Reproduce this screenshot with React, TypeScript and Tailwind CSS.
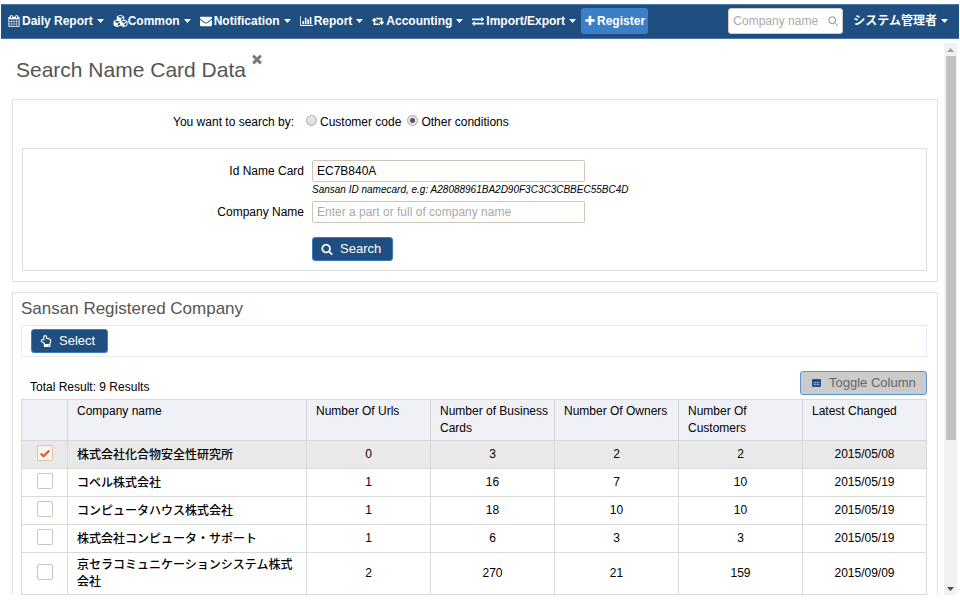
import React from "react";
import { FaCubes, FaRegHandPointUp } from "react-icons/fa";

function Glyph({ d, box = "0 0 1792 1792", className }: { d: string; box?: string; className: string }) {
  return (
    <svg viewBox={box} fill="currentColor" aria-hidden="true" className={`shrink-0 ${className}`}>
      <path d={d} />
    </svg>
  );
}

const CALENDAR =
  "M192 1664h288v-288h-288v288zm352 0h320v-288h-320v288zm-352-352h288v-320h-288v320zm352 0h320v-320h-320v320zm-352-384h288v-288h-288v288zm736 736h320v-288h-320v288zm-384-736h320v-288h-320v288zm768 736h288v-288h-288v288zm-384-352h320v-320h-320v320zm-352-864v-288q0-13-9.5-22.5t-22.5-9.5h-64q-13 0-22.5 9.5t-9.5 22.5v288q0 13 9.5 22.5t22.5 9.5h64q13 0 22.5-9.5t9.5-22.5zm736 864h288v-320h-288v320zm-384-384h320v-288h-320v288zm384 0h288v-288h-288v288zm32-480v-288q0-13-9.5-22.5t-22.5-9.5h-64q-13 0-22.5 9.5t-9.5 22.5v288q0 13 9.5 22.5t22.5 9.5h64q13 0 22.5-9.5t9.5-22.5zm384-64v1280q0 52-38 90t-90 38h-1408q-52 0-90-38t-38-90v-1280q0-52 38-90t90-38h128v-96q0-66 47-113t113-47h64q66 0 113 47t47 113v96h384v-96q0-66 47-113t113-47h64q66 0 113 47t47 113v96h128q52 0 90 38t38 90z";
const ENVELOPE =
  "M1792 710v794q0 66-47 113t-113 47h-1472q-66 0-113-47t-47-113v-794q44 49 101 87 362 246 497 345 57 42 92.5 65.5t94.5 48 110 24.5h2q51 0 110-24.5t94.5-48 92.5-65.5q170-123 498-345 57-39 100-87zm0-294q0 79-49 151t-122 123q-376 261-468 325-10 7-42.5 31t-54 38.5-52 32.5-57.5 27-50 9h-2q-23 0-50-9t-57.5-27-52-32.5-54-38.5-42.5-31q-91-64-262-182.5t-205-142.5q-62-42-117-115.5t-55-136.5q0-78 41.5-130t118.5-52h1472q65 0 112.5 47t47.5 113z";
const BARS =
  "M640 896v512h-256v-512h256zm384-512v1024h-256v-1024h256zm1024 1152v128h-2048v-1536h128v1408h1920zm-640-896v768h-256v-768h256zm384-384v1152h-256v-1152h256z";
const RETWEET =
  "M1280 1504q0 13-9.5 22.5t-22.5 9.5h-960q-8 0-13.5-2t-9-7-5.5-8-3-11.5-1-11.5v-600h-192q-26 0-45-19t-19-45q0-24 15-41l320-384q19-22 49-22t49 22l320 384q15 17 15 41 0 26-19 45t-45 19h-192v384h576q16 0 25 11l160 192q7 10 7 21zm640-416q0 24-15 41l-320 384q-20 23-49 23t-49-23l-320-384q-15-17-15-41 0-26 19-45t45-19h192v-384h-576q-16 0-25-12l-160-192q-7-9-7-20 0-13 9.5-22.5t22.5-9.5h960q8 0 13.5 2t9 7 5.5 8 3 11.5 1 11.5v600h192q26 0 45 19t19 45z";
const EXCHANGE =
  "M1792 1184v192q0 13-9.5 22.5t-22.5 9.5h-1376v192q0 13-9.5 22.5t-22.5 9.5q-12 0-24-10l-319-320q-9-9-9-22 0-14 9-23l320-320q9-9 23-9 13 0 22.5 9.5t9.5 22.5v192h1376q13 0 22.5 9.5t9.5 22.5zm0-544q0 14-9 23l-320 320q-9 9-23 9-13 0-22.5-9.5t-9.5-22.5v-192h-1376q-13 0-22.5-9.5t-9.5-22.5v-192q0-13 9.5-22.5t22.5-9.5h1376v-192q0-14 9-23t23-9q12 0 24 10l319 319q9 9 9 23z";
const PLUS =
  "M1600 736v192q0 40-28 68t-68 28h-416v416q0 40-28 68t-68 28h-192q-40 0-68-28t-28-68v-416h-416q-40 0-68-28t-28-68v-192q0-40 28-68t68-28h416v-416q0-40 28-68t68-28h192q40 0 68 28t28 68v416h416q40 0 68 28t28 68z";
const SEARCH =
  "M1216 832q0-185-131.5-316.5t-316.5-131.5-316.5 131.5-131.5 316.5 131.5 316.5 316.5 131.5 316.5-131.5 131.5-316.5zm512 832q0 52-38 90t-90 38q-54 0-90-38l-343-342q-179 124-399 124-143 0-273.5-55.5t-225-150-150-225-55.5-273.5 55.5-273.5 150-225 225-150 273.5-55.5 273.5 55.5 225 150 150 225 55.5 273.5q0 220-124 399l343 343q37 37 37 90z";
const TIMES =
  "M1490 1322q0 40-28 68l-136 136q-28 28-68 28t-68-28l-294-294-294 294q-28 28-68 28t-68-28l-136-136q-28-28-28-68t28-68l294-294-294-294q-28-28-28-68t28-68l136-136q28-28 68-28t68 28l294 294 294-294q28-28 68-28t68 28l136 136q28 28 28 68t-28 68l-294 294 294 294q28 28 28 68z";

function Caret() {
  return (
    <svg viewBox="0 0 7 4" fill="currentColor" aria-hidden="true" className="ml-1 h-1 w-[7px] shrink-0">
      <path d="M0 0h7L3.5 4z" />
    </svg>
  );
}

const menus = [
  { label: "Daily Report", icon: <Glyph d={CALENDAR} className="mr-[2px] h-3 w-3" /> },
  { label: "Common", icon: <FaCubes aria-hidden="true" className="h-[14px] w-[15px] shrink-0" /> },
  { label: "Notification", icon: <Glyph d={ENVELOPE} className="mr-[2px] h-3 w-3" /> },
  { label: "Report", icon: <Glyph d={BARS} box="0 0 2048 1792" className="mr-px h-3 w-[13px]" /> },
  { label: "Accounting", icon: <Glyph d={RETWEET} box="0 0 1920 1792" className="mr-[2px] h-3 w-3" /> },
  { label: "Import/Export", icon: <Glyph d={EXCHANGE} className="mr-[2px] h-3 w-3" /> },
];

const columns = ["Number Of Urls", "Number of Business Cards", "Number Of Owners", "Number Of Customers", "Latest Changed"];

const rows = [
  { name: "株式会社化合物安全性研究所", cells: ["0", "3", "2", "2", "2015/05/08"], checked: true },
  { name: "コベル株式会社", cells: ["1", "16", "7", "10", "2015/05/19"], checked: false },
  { name: "コンピュータハウス株式会社", cells: ["1", "18", "10", "10", "2015/05/19"], checked: false },
  { name: "株式会社コンピュータ・サポート", cells: ["1", "6", "3", "3", "2015/05/19"], checked: false },
  { name: "京セラコミュニケーションシステム株式会社", cells: ["2", "270", "21", "159", "2015/09/09"], checked: false },
];

const radio =
  "mb-[3px] size-[11px] appearance-none rounded-full border border-[#a9a9a9] bg-linear-to-b from-[#e9e9e9] to-[#dcdcdc] checked:bg-[radial-gradient(circle,#555_0_2px,#e4e4e4_3px)]";
const field =
  "h-[22px] w-[273px] rounded-[2px] border border-[#cfc4b6] bg-white px-1 text-xs text-black placeholder:text-[#aaa] focus:outline-none";
const primary =
  "flex h-6 items-center rounded-[3px] border border-[#3b7cc4] bg-[#1f4f80] px-2 text-[13px] leading-4 text-white";

function NavBar() {
  return (
    <nav className="mx-px mt-1 flex h-[35px] shrink-0 items-center border-y border-[#4a76a8] bg-[#1f4f80] pb-[2px] text-xs font-bold text-white">
      <ul className="flex items-center gap-[9px] pl-[7px]">
        {menus.map((m) => (
          <li key={m.label}>
            <button type="button" className="flex items-center whitespace-nowrap">
              {m.icon}
              {m.label}
              <Caret />
            </button>
          </li>
        ))}
      </ul>
      <button type="button" className="ml-[5px] flex h-[26px] items-center rounded-[3px] bg-[#3d7fc6] px-[3px]">
        <Glyph d={PLUS} className="mr-px h-3 w-3" />
        Register
      </button>
      <label className="mr-[10px] ml-auto flex h-[26px] w-[115px] items-center rounded-[3px] border border-[#d5ccc0] bg-white px-1">
        <input
          type="text"
          aria-label="Company name"
          placeholder="Company name"
          className="w-0 flex-1 text-xs font-normal text-black placeholder:text-[#aaa] focus:outline-none"
        />
        <svg viewBox="0 0 10 10" fill="none" stroke="#8a8a8a" aria-hidden="true" className="size-[10px] shrink-0">
          <circle cx="4.2" cy="4.2" r="3.4" />
          <path d="M6.8 6.8L9.6 9.6" />
        </svg>
      </label>
      <button type="button" className="mr-[11px] flex items-center whitespace-nowrap">
        システム管理者
        <Caret />
      </button>
    </nav>
  );
}

function SearchPanel() {
  return (
    <section className="border border-[#e2e2e2] pr-[10px] pb-[10px] pl-[9px]">
      <div role="radiogroup" aria-labelledby="mode-label" className="flex h-12 items-center pb-[5px]">
        <span id="mode-label" className="w-[272px] text-right">You want to search by:</span>
        <label className="ml-3 flex items-center gap-[3px]">
          <input type="radio" name="mode" className={radio} />
          Customer code
        </label>
        <label className="ml-[6px] flex items-center gap-[3px]">
          <input type="radio" name="mode" defaultChecked className={radio} />
          Other conditions
        </label>
      </div>
      <form className="border border-[#dedede] pt-[11px] pb-[9px]" onSubmit={(e) => e.preventDefault()}>
        <div className="grid grid-cols-[281px_1fr] gap-x-2">
          <label htmlFor="card" className="text-right leading-[22px]">Id Name Card</label>
          <div>
            <input id="card" type="text" defaultValue="EC7B840A" className={`block ${field}`} />
            <p className="h-[19px] text-[10px] leading-4 italic">
              Sansan ID namecard, e.g: A28088961BA2D90F3C3C3CBBEC55BC4D
            </p>
          </div>
          <label htmlFor="company" className="text-right leading-[22px]">Company Name</label>
          <input id="company" type="text" placeholder="Enter a part or full of company name" className={field} />
          <button type="submit" className={`col-start-2 mt-[14px] w-[81px] ${primary}`}>
            <Glyph d={SEARCH} className="mr-[7px] h-3 w-3" />
            Search
          </button>
        </div>
      </form>
    </section>
  );
}

function ResultTable() {
  return (
    <table className="w-full table-fixed border-separate border-spacing-0 border-t border-l border-[#dadada] leading-[17px]">
      <colgroup>
        <col className="w-[46px]" />
        <col />
        {columns.map((c) => (
          <col key={c} className="w-[124px]" />
        ))}
      </colgroup>
      <thead>
        <tr className="h-[41px] bg-[#f0f1f6] text-left align-top">
          <th aria-label="Selected" className="border-r border-b border-[#d6d7dc]" />
          {["Company name", ...columns].map((c) => (
            <th key={c} className="border-r border-b border-[#d6d7dc] py-[3px] pr-1 pl-[9px] font-normal">
              {c}
            </th>
          ))}
        </tr>
      </thead>
      <tbody>
        {rows.map((r) => (
          <tr key={r.name} className={r.checked ? "bg-[#e9e9e9]" : "bg-white"}>
            <td className="border-r border-b border-[#dadada] p-0 pb-[3px]">
              <span className="mx-auto grid size-4 place-items-center">
                <input
                  type="checkbox"
                  aria-label={r.name}
                  defaultChecked={r.checked}
                  className="peer col-start-1 row-start-1 size-4 appearance-none rounded-[2px] border border-[#cfc4b6] bg-white checked:border-[#e3c4ae] checked:bg-[#f8f4f1]"
                />
                <svg
                  viewBox="0 0 10 9"
                  fill="none"
                  stroke="#d2622a"
                  strokeWidth="2.2"
                  aria-hidden="true"
                  className="pointer-events-none invisible col-start-1 row-start-1 h-[9px] w-[10px] peer-checked:visible"
                >
                  <path d="M0.8 4.6L3.6 7.2L9.2 1.4" />
                </svg>
              </span>
            </td>
            <td className="border-r border-b border-[#dadada] pt-1 pr-[10px] pb-[3px] pl-[9px] font-medium">{r.name}</td>
            {r.cells.map((c, i) => (
              <td key={i} className="h-7 border-r border-b border-[#dadada] p-0 text-center">
                {c}
              </td>
            ))}
          </tr>
        ))}
      </tbody>
    </table>
  );
}

function ResultPanel() {
  return (
    <section className="mt-[10px] border border-b-0 border-[#e2e2e2] pr-[10px] pl-2">
      <h2 className="pt-[3px] text-[17px] leading-[26px] text-[#555]">Sansan Registered Company</h2>
      <div className="mt-[3px] border border-[#e3ebf5] px-[9px] py-[3px]">
        <button type="button" className={`w-[77px] ${primary}`}>
          <FaRegHandPointUp aria-hidden="true" className="mr-[7px] size-3 shrink-0" />
          Select
        </button>
      </div>
      <div className="mt-[14px] mb-1 flex items-start justify-between">
        <p className="pt-2 pl-[9px] leading-4">Total Result: 9 Results</p>
        <button
          type="button"
          className="flex h-6 w-[127px] items-center rounded-[3px] border border-[#5b93cf] bg-[#cbcbcb] pl-[11px] text-[13px] leading-4 text-[#666]"
        >
          <svg viewBox="0 0 9 8" aria-hidden="true" className="mr-2 h-2 w-[9px] shrink-0">
            <rect width="9" height="8" rx="1" fill="#1f4f80" />
            <path d="M1 3.5h7M1 5.5h7M3.2 2.5v4.5M5.8 2.5v4.5" stroke="#8fabcb" strokeWidth="0.6" />
          </svg>
          Toggle Column
        </button>
      </div>
      <ResultTable />
    </section>
  );
}

function ScrollTrack() {
  return (
    <div aria-hidden="true" className="mr-[3px] flex w-[13px] shrink-0 flex-col items-center bg-[#f1f1f1]">
      <div className="flex h-[13px] shrink-0 items-center">
        <svg viewBox="0 0 7 4" className="h-1 w-[7px]" fill="#a0a0a0"><path d="M0 4h7L3.5 0z" /></svg>
      </div>
      <div className="flex w-full flex-1 flex-col pr-px pl-[2px]">
        <div className="h-[73%] bg-[#c1c1c1]" />
      </div>
      <div className="flex h-[13px] shrink-0 items-center">
        <svg viewBox="0 0 7 4" className="h-1 w-[7px]" fill="#505050"><path d="M0 0h7L3.5 4z" /></svg>
      </div>
    </div>
  );
}

export default function App() {
  return (
    <div className="flex h-screen flex-col bg-white pb-[5px] font-['Liberation_Sans','Noto_Sans_CJK_JP',sans-serif] text-xs text-black">
      <NavBar />
      <div className="mt-1 flex min-h-0 flex-1">
        <main className="min-w-0 flex-1 overflow-hidden pr-[6px] pl-3">
          <header className="flex h-14 items-start pl-1">
            <h1 className="pt-[13px] text-[21px] leading-7 text-[#555]">Search Name Card Data</h1>
            <button type="button" aria-label="Close" className="mt-[9px] ml-1 text-[#7b7b7b]">
              <Glyph d={TIMES} className="size-[14px]" />
            </button>
          </header>
          <SearchPanel />
          <ResultPanel />
        </main>
        <ScrollTrack />
      </div>
    </div>
  );
}
